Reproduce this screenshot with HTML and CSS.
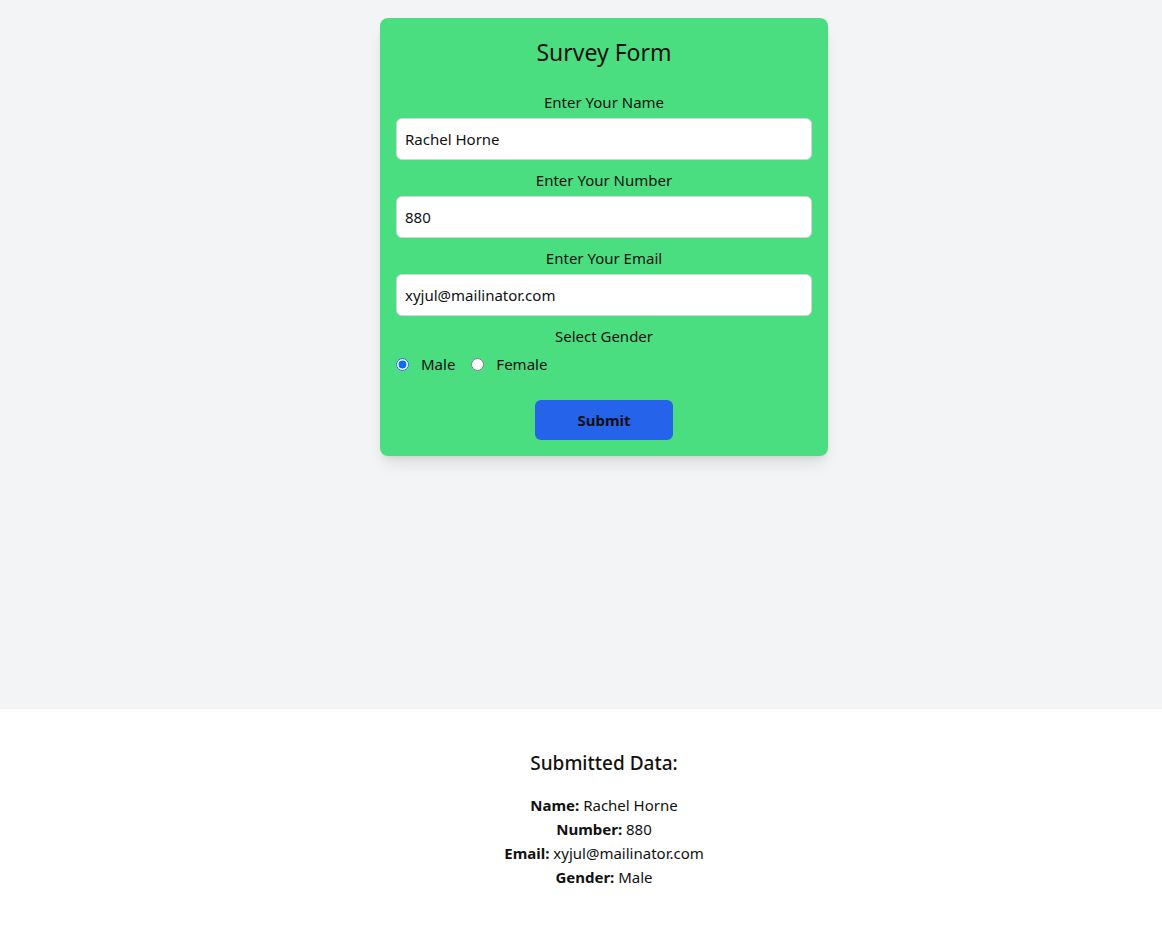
FILE: index.html
```html
<!DOCTYPE html>
<html lang="en">
<head>
<meta charset="utf-8">
<title>Survey Form</title>
<link rel="stylesheet" href="styles.css">
</head>
<body>
<main class="page">
  <section class="stage">
    <form class="card">
      <h1 class="title">Survey Form</h1>
      <label class="label" for="name">Enter Your Name</label>
      <input class="field" id="name" type="text" value="Rachel Horne">
      <label class="label" for="number">Enter Your Number</label>
      <input class="field" id="number" type="text" value="880">
      <label class="label" for="email">Enter Your Email</label>
      <input class="field" id="email" type="text" value="xyjul@mailinator.com">
      <div class="label gender-label">Select Gender</div>
      <div class="radios">
        <label class="radio"><input type="radio" name="g" checked> <span>Male</span></label>
        <label class="radio"><input type="radio" name="g"> <span>Female</span></label>
      </div>
      <div class="actions">
        <button type="button" class="submit">Submit</button>
      </div>
    </form>
  </section>
  <section class="result">
    <h2 class="result-title">Submitted Data:</h2>
    <p class="row"><b>Name:</b> Rachel Horne</p>
    <p class="row"><b>Number:</b> 880</p>
    <p class="row"><b>Email:</b> xyjul@mailinator.com</p>
    <p class="row"><b>Gender:</b> Male</p>
  </section>
</main>
</body>
</html>
```
FILE: styles.css
```css
* { box-sizing: border-box; }
html, body { margin: 0; padding: 0; background: #fff; }
body {
  font-family: "Noto Sans", "Open Sans", sans-serif;
  font-size: 16px;
  line-height: 24px;
  color: #111;
}
.stage {
  background: #f3f4f6;
  height: 709px;
  padding-top: 18px;
  padding-left: 46px;
}
.card {
  width: 448px;
  margin: 0 auto;
  background: #4ade80;
  border-radius: 8px;
  padding: 16px;
  display: flex;
  flex-direction: column;
  box-shadow: 0 10px 15px -3px rgba(0,0,0,0.1), 0 4px 6px -4px rgba(0,0,0,0.1);
}
.title {
  margin: 2px 0 22px;
  font-size: 23px;
  line-height: 32px;
  font-weight: 400;
  text-align: center;
  color: #111;
}
.label {
  display: block;
  text-align: center;
  font-size: 15px;
  line-height: 24px;
  margin-bottom: 4px;
  color: #111;
}
.field {
  display: block;
  width: 100%;
  height: 42px;
  border: 1px solid #d1d5db;
  border-radius: 6px;
  padding: 0 8px;
  font: inherit;
  font-size: 15px;
  color: #111;
  background: #fff;
  margin-bottom: 8px;
}
.gender-label { margin-bottom: 4px; }
.radios {
  display: flex;
  gap: 16px;
  height: 24px;
  align-items: center;
  font-size: 15px;
}
.radio {
  display: flex;
  align-items: center;
  gap: 12px;
}
.radio input {
  margin: 0;
  width: 13px;
  height: 13px;
  accent-color: #0b6cf0;
}
.actions {
  display: flex;
  justify-content: center;
  margin-top: 24px;
}
.submit {
  width: 33.3333%;
  height: 40px;
  background: #2563eb;
  border: 0;
  border-radius: 6px;
  font: inherit;
  font-size: 15px;
  font-weight: 700;
  color: #111;
}
.result {
  background: #fff;
  padding: 40px 16px 16px 62px;
  text-align: center;
  box-shadow: 0 2px 4px rgba(0,0,0,0.12), 0 1px 2px rgba(0,0,0,0.06);
}
.result-title {
  margin: 0 0 16px;
  font-size: 19px;
  line-height: 28px;
  font-weight: 500;
}
.row {
  margin: 0;
  font-size: 15px;
  line-height: 24px;
}
.row b { font-weight: 700; }
```
